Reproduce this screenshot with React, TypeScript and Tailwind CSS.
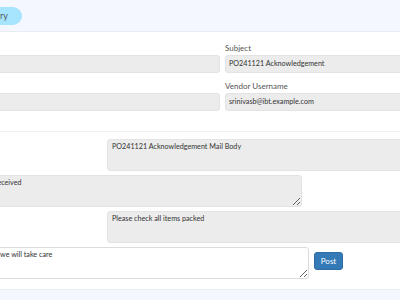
const fields = [
  { left: 'PO Number', leftValue: '', right: 'Subject', rightValue: 'PO241121 Acknowledgement' },
  { left: 'Vendor Name', leftValue: '', right: 'Vendor Username', rightValue: 'srinivasb@ibt.example.com' },
]

const messages = [
  { side: 'right', text: 'PO241121 Acknowledgement Mail Body' },
  { side: 'left', text: 'Parts received' },
  { side: 'right', text: 'Please check all items packed' },
]

function Field({ label, value }: { label: string; value: string }) {
  return (
    <div className="flex flex-col">
      <span className="text-[8px] leading-[12px] mb-[1px] text-[#555]">{label}</span>
      <div className="h-[18px] rounded-[3px] border border-[#e3e3e3] bg-[#ececec] px-[3px] flex items-center text-[7.2px] text-[#333]">
        {value}
      </div>
    </div>
  )
}

export default function App() {
  return (
    <div className="w-[400px] h-[300px] overflow-hidden bg-[#f4f8fe] font-['Lato',sans-serif]">
      <div className="h-[32px] border-b border-[#e8edf3] flex items-center">
        <span className="ml-[-58px] w-[80px] h-[18px] rounded-full bg-[#a7e4fd] flex items-center justify-end pr-[14px] text-[9px] text-[#4f5d66]">
          Delivery
        </span>
      </div>

      <div className="bg-white">
        <div className="ml-[-160px] w-[765px] grid grid-cols-2 gap-x-[5px] gap-y-[7px] pt-[10px] pb-[20px] border-b border-[#eef0f3]">
          {fields.map((f) => (
            <div key={f.right} className="contents">
              <Field label={f.left} value={f.leftValue} />
              <Field label={f.right} value={f.rightValue} />
            </div>
          ))}
        </div>

        <div className="ml-[-28px] w-[465px] flex flex-col gap-[4px] pt-[7px] pb-[10px] border-b border-[#e8edf3]">
          {messages.map((m, i) => (
            <textarea
              key={i}
              readOnly
              defaultValue={m.text}
              className={`h-[32px] w-[330px] rounded-[3px] border border-[#e3e3e3] bg-[#ececec] px-[4px] py-[2px] text-[7.2px] leading-[10px] text-[#333] outline-none ${
                m.side === 'right' ? 'ml-auto' : ''
              }`}
            />
          ))}
          <div className="flex items-start gap-[5px]">
            <textarea
              defaultValue="Noted, we will take care"
              className="h-[32px] w-[337px] rounded-[3px] border border-[#dcdcdc] bg-white px-[4px] py-[2px] text-[7.2px] leading-[10px] text-[#333] outline-none"
            />
            <button className="mt-[5px] h-[18px] w-[29px] rounded-[3px] border border-[#2e6da4] bg-[#337ab7] text-[8px] text-white">
              Post
            </button>
          </div>
        </div>
      </div>
    </div>
  )
}
